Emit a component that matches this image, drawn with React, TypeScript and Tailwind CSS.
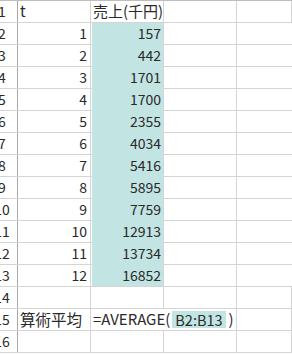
const rows: [number, number][] = [
  [1, 157],
  [2, 442],
  [3, 1701],
  [4, 1700],
  [5, 2355],
  [6, 4034],
  [7, 5416],
  [8, 5895],
  [9, 7759],
  [10, 12913],
  [11, 13734],
  [12, 16852],
];

const font = { fontFamily: '"Noto Sans CJK JP", "Noto Sans", sans-serif' };

const RowHead = ({ n }: { n: number }) => (
  <div className="w-[31px] -ml-[13px] shrink-0 border-r border-[#a8a8a8] flex items-center justify-center">
    {n}
  </div>
);

const Cell = ({ children, className = '' }: { children?: React.ReactNode; className?: string }) => (
  <div className={`w-[73px] shrink-0 border-r border-[#d4d4d4] flex items-center whitespace-nowrap ${className}`}>
    {children}
  </div>
);

export default function App() {
  return (
    <div className="w-[292px] h-[354px] overflow-hidden bg-white text-[14px] text-[#2a2a2a]" style={font}>
      <div className="border-t border-[#bdbdbd]">
        <div className="flex h-[22px] border-b border-[#d4d4d4]">
          <RowHead n={1} />
          <Cell className="pl-[2px] text-[15px]">t</Cell>
          <Cell className="pl-[2px] text-[15px]">売上(千円)</Cell>
          <Cell />
          <Cell className="flex-1" />
        </div>

        {rows.map(([t, v], i) => {
          const last = i === rows.length - 1;
          return (
            <div key={t} className="flex h-[22px]">
              <div className="flex border-b border-[#d4d4d4]">
                <RowHead n={t + 1} />
                <Cell className="justify-end pr-[3px]">{t}</Cell>
              </div>
              <div
                className={`w-[73px] shrink-0 flex border-r border-b border-r-[#d4d4d4] ${
                  last ? 'border-b-[#d4d4d4]' : 'border-b-[#c2e4e2]'
                }`}
              >
                <div className="flex-1 ml-px bg-[#c2e4e2] flex items-center justify-end pr-[2px]">{v}</div>
              </div>
              <div className="flex flex-1 border-b border-[#d4d4d4]">
                <Cell />
                <Cell className="flex-1" />
              </div>
            </div>
          );
        })}

        <div className="flex h-[22px] border-b border-[#d4d4d4]">
          <RowHead n={14} />
          <Cell />
          <Cell />
          <Cell />
          <Cell className="flex-1" />
        </div>

        <div className="flex h-[22px] border-b border-[#d4d4d4]">
          <RowHead n={15} />
          <Cell className="pl-[2px] text-[15.5px]">算術平均</Cell>
          <div className="w-[146px] shrink-0 border-r border-[#d4d4d4] flex items-center pl-[2px] whitespace-nowrap text-[15px]">
            <span>=AVERAGE(</span>
            <span className="ml-[2px] px-[3px] bg-[#c2e4e2] leading-[17px] text-[14.5px]">B2:B13</span>
            <span className="ml-[3px]">)</span>
          </div>
          <Cell className="flex-1" />
        </div>

        <div className="flex h-[22px] border-b border-[#d4d4d4]">
          <RowHead n={16} />
          <Cell />
          <Cell />
          <Cell />
          <Cell className="flex-1" />
        </div>
      </div>
    </div>
  );
}
